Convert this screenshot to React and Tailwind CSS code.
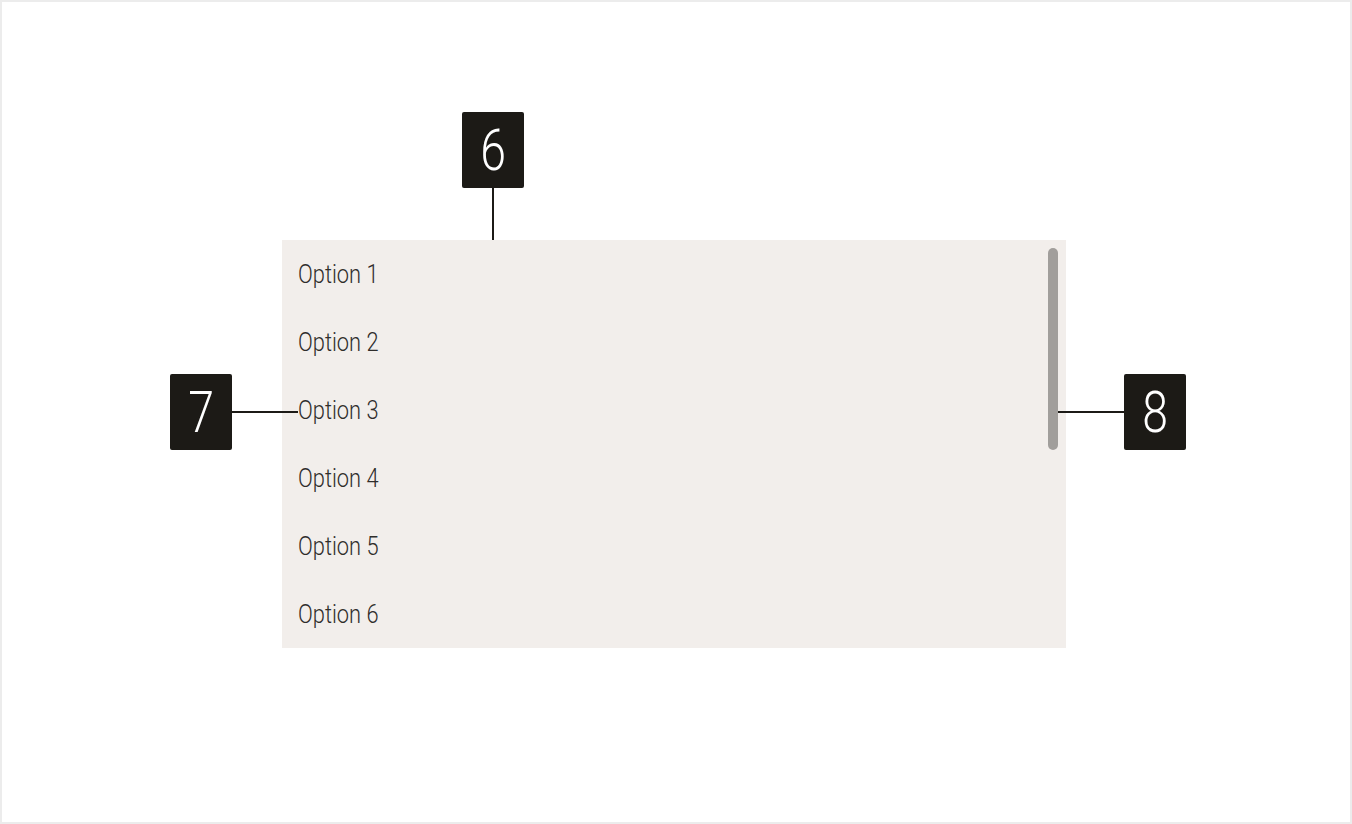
const options = ['Option 1', 'Option 2', 'Option 3', 'Option 4', 'Option 5', 'Option 6'];

const Box = ({ n }) => (
  <div className="w-[62px] h-[76px] shrink-0 rounded-[2px] bg-[#1c1a16] flex items-center justify-center">
    <span className="scale-x-[0.8] text-white text-[58px] font-light leading-none font-['Roboto',sans-serif]">{n}</span>
  </div>
);

const App = () => {
  return (
    <div className="w-[1352px] h-[824px] bg-white border-2 border-[#ececec] overflow-hidden">
      <div className="relative ml-[280px] mt-[238px] w-[784px] h-[408px] bg-[#f2eeeb] flex">
        {/* Options */}
        <div className="flex-1 flex flex-col">
          {options.map(o => (
            <div key={o} className="h-[68px] flex items-center pl-4">
              <span className="origin-left scale-x-[0.84] text-[26px] font-light text-[#2f2d2b] font-['Roboto',sans-serif]">
                {o}
              </span>
            </div>
          ))}
        </div>

        {/* Scrollbar */}
        <div className="w-[10px] mr-2 pt-2">
          <div className="h-[202px] rounded-full bg-[#a19e9b]" />
        </div>

        {/* Callout 6 */}
        <div className="absolute left-[180px] top-[-128px] flex flex-col items-center">
          <Box n="6" />
          <div className="w-[2px] h-[52px] bg-[#1c1a16]" />
        </div>

        {/* Callout 7 */}
        <div className="absolute left-[-112px] top-[134px] flex items-center">
          <Box n="7" />
          <div className="w-[66px] h-[2px] bg-[#1c1a16]" />
        </div>

        {/* Callout 8 */}
        <div className="absolute left-[776px] top-[134px] flex items-center">
          <div className="w-[66px] h-[2px] bg-[#1c1a16]" />
          <Box n="8" />
        </div>
      </div>
    </div>
  );
};

export default App;
